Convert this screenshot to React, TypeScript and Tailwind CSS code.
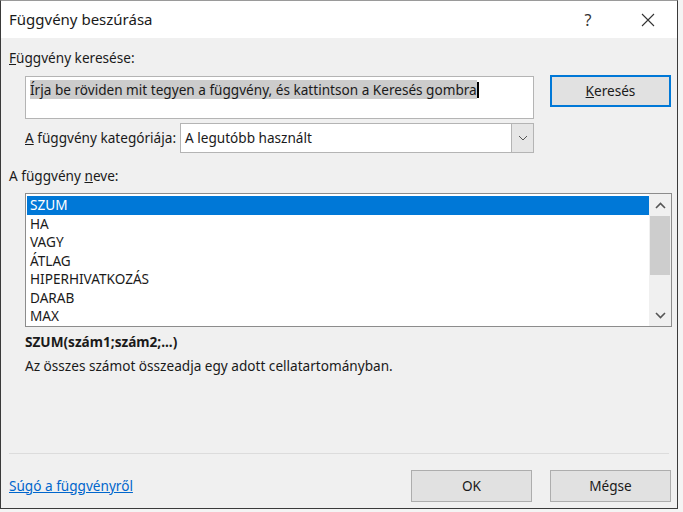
import React from "react";

const font = { fontFamily: '"Noto Sans", "Open Sans", sans-serif' };

const items = ["SZUM", "HA", "VAGY", "ÁTLAG", "HIPERHIVATKOZÁS", "DARAB", "MAX"];

export default function App() {
  return (
    <div className="w-[683px] h-[512px] bg-[#f4f4f4] overflow-hidden" style={font}>
      <div className="w-[678px] h-[509px] border border-[#3a3a3a] border-t-[#9a9a9a] bg-[#f0f0f0] flex flex-col text-[13.6px] text-[#1a1a1a]">
        {/* title bar */}
        <div className="h-[37px] bg-white flex items-center pl-[8px] shrink-0">
          <div className="text-[15px] text-[#1a1a1a] flex-1">Függvény beszúrása</div>
          <div className="w-[40px] text-center text-[16px] text-[#333] mr-[20px]">?</div>
          <div className="w-[40px] flex justify-center mr-[9px]">
            <svg width="14" height="14" viewBox="0 0 14 14">
              <path d="M1 1 L13 13 M13 1 L1 13" stroke="#333" strokeWidth="1.1" fill="none" />
            </svg>
          </div>
        </div>

        {/* body */}
        <div className="flex-1 flex flex-col pl-[8px] pr-[5px]">
          <div className="mt-[11px] leading-[18px]">
            <span className="underline">F</span>üggvény keresése:
          </div>
          <div className="flex mt-[9px]">
            <div className="ml-[16px] w-[509px] h-[43px] bg-white border border-[#b4b4b4] pl-[4px] pt-[4px] leading-[17px] whitespace-nowrap">
              <span className="bg-[#cccccc]">Írja be röviden mit tegyen a függvény, és kattintson a Keresés gombra</span>
              <span className="inline-block w-[2px] h-[16px] bg-black align-[-3px]" />
            </div>
            <div className="ml-[16px] mt-[-1px] w-[121px] h-[32px] bg-[#e1e1e1] border-2 border-[#0078d7] flex items-center justify-center">
              <span>
                <span className="underline">K</span>eresés
              </span>
            </div>
          </div>
          <div className="flex items-center mt-[4px] ml-[16px]">
            <div className="w-[155px] whitespace-nowrap">
              <span className="underline">A</span> függvény kategóriája:
            </div>
            <div className="w-[354px] h-[30px] bg-white border border-[#b4b4b4] flex items-center">
              <div className="flex-1 pl-[4px]">A legutóbb használt</div>
              <div className="w-[22px] h-[28px] bg-[#e6e6e6] border-l border-[#b4b4b4] flex items-center justify-center">
                <svg width="10" height="6" viewBox="0 0 10 6">
                  <path d="M1 1 L5 5 L9 1" stroke="#555" strokeWidth="1" fill="none" />
                </svg>
              </div>
            </div>
          </div>
          <div className="mt-[14px] leading-[18px]">
            A függvény <span className="underline">n</span>eve:
          </div>
          <div className="ml-[16px] mt-[8px] w-[647px] h-[134px] bg-white border border-[#8c8c8c] flex">
            <div className="flex-1 pt-[2px] pl-[1px]">
              {items.map((it, i) => (
                <div
                  key={it}
                  className={
                    i === 0
                      ? "h-[18.5px] leading-[18.5px] pl-[3px] bg-[#0078d7] text-white"
                      : "h-[18.5px] leading-[18.5px] pl-[3px]"
                  }
                >
                  {it}
                </div>
              ))}
            </div>
            <div className="w-[22px] bg-[#f0f0f0] flex flex-col items-center">
              <div className="h-[22px] flex items-center justify-center">
                <svg width="11" height="7" viewBox="0 0 11 7">
                  <path d="M1 6 L5.5 1.5 L10 6" stroke="#555" strokeWidth="1.6" fill="none" />
                </svg>
              </div>
              <div className="w-[20px] h-[59px] bg-[#cdcdcd]" />
              <div className="flex-1" />
              <div className="h-[22px] flex items-center justify-center">
                <svg width="11" height="7" viewBox="0 0 11 7">
                  <path d="M1 1 L5.5 5.5 L10 1" stroke="#555" strokeWidth="1.6" fill="none" />
                </svg>
              </div>
            </div>
          </div>
          <div className="ml-[16px] mt-[5px] font-bold leading-[20px]">SZUM(szám1;szám2;...)</div>
          <div className="ml-[16px] mt-[4px] leading-[20px]">Az összes számot összeadja egy adott cellatartományban.</div>
          <div className="flex-1" />
          <div className="h-px bg-[#dcdcdc] mr-[3px]" />
          <div className="flex items-center h-[32px] mt-[16px] mb-[6px]">
            <div className="flex-1 text-[#0066cc] underline">Súgó a függvényről</div>
            <div className="w-[121px] h-[32px] bg-[#e1e1e1] border border-[#adadad] flex items-center justify-center">OK</div>
            <div className="ml-[18px] mr-[1px] w-[121px] h-[32px] bg-[#e1e1e1] border border-[#adadad] flex items-center justify-center">Mégse</div>
          </div>
        </div>
      </div>
    </div>
  );
}
